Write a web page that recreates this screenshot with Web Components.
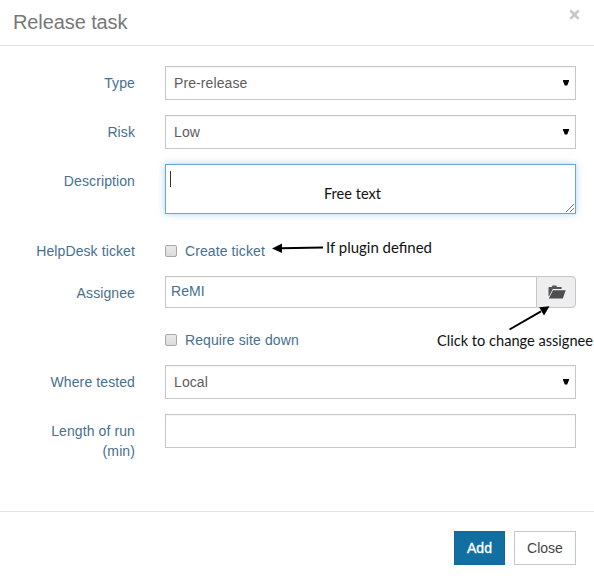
<!DOCTYPE html>
<html lang="en">
<head>
<meta charset="utf-8">
<title>Release task</title>
<style>
html,body{margin:0;background:#fff}
body{font:14px/20px "Liberation Sans",Arial,sans-serif;color:#476f8f;width:594px;height:584px;overflow:hidden}
</style>
</head>
<body>
<task-dialog heading="Release task">
  <form-row label="Type"><select-box>Pre-release</select-box></form-row>
  <form-row label="Risk"><select-box>Low</select-box></form-row>
  <form-row label="Description" style="--after:27px"><text-area></text-area></form-row>
  <form-row label="HelpDesk ticket" style="--pad:0px;--after:15px"><check-box>Create ticket</check-box></form-row>
  <form-row label="Assignee" style="--after:22px"><picker-box>ReMI</picker-box></form-row>
  <form-row label="" style="--pad:0px;--after:15px"><check-box>Require site down</check-box></form-row>
  <form-row label="Where tested"><select-box>Local</select-box></form-row>
  <form-row label="Length of run (min)"><input-box></input-box></form-row>
  <push-button slot="actions" primary>Add</push-button>
  <push-button slot="actions">Close</push-button>
</task-dialog>
<note-layer></note-layer>
<script>
const define = (name, html, setup) => customElements.define(name, class extends HTMLElement {
  connectedCallback() {
    if (this.shadowRoot) return;
    const t = document.createElement('template');
    t.innerHTML = html;
    this.attachShadow({mode: 'open'}).append(t.content.cloneNode(true));
    if (setup) setup(this, this.shadowRoot);
  }
});

define('task-dialog', `<style>
:host{display:flex;flex-direction:column;height:584px;position:relative}
header{box-sizing:border-box;height:46px;border-bottom:1px solid #e2e2e2;padding:7px 14px 0 13px;display:flex;justify-content:space-between}
h1{margin:0;font-size:20px;line-height:30px;font-weight:400;color:#777;letter-spacing:-.1px}
svg{width:11px;height:11px;margin-top:2px;display:block}
main{box-sizing:border-box;height:465px;padding:20px 18px 0 0;letter-spacing:.1px}
footer{border-top:1px solid #e2e2e2;padding:19px 18px 0;display:flex;justify-content:flex-end;gap:9px}
</style>
<header><h1></h1><svg viewBox="0 0 11 11"><path d="M1.3 1.5 9.7 9.9M9.7 1.5 1.3 9.9" stroke="#c8c8c8" stroke-width="2.7"/></svg></header>
<main><slot></slot></main>
<footer><slot name="actions"></slot></footer>`, (el, r) => r.querySelector('h1').textContent = el.getAttribute('heading'));

define('form-row', `<style>
:host{display:grid;grid-template-columns:135px 411px;column-gap:30px;align-items:start;margin-bottom:var(--after,15px)}
label{padding:var(--pad,7px) 0 0 30px;text-align:right}
div{min-width:0}
:host([label^="Length"]) label{padding-left:45px}
</style><label></label><div><slot></slot></div>`, (el, r) => r.querySelector('label').textContent = el.getAttribute('label'));

define('select-box', `<style>
:host{display:flex;box-sizing:border-box;height:34px;border:1px solid #c4c6c8;padding:0 6px 0 8px;align-items:center;justify-content:space-between;color:#5c5c5c;box-shadow:inset 0 1px 1px #0000000a}
svg{width:6px;height:6px;display:block}
</style><span><slot></slot></span><svg viewBox="0 0 6 6"><path d="M0 0H6V1L4.2 5.5H1.8L0 1Z"/></svg>`);

define('input-box', `<style>:host{display:block;box-sizing:border-box;height:34px;border:1px solid #c4c6c8;box-shadow:inset 0 1px 1px #0000000a}</style>`);

define('text-area', `<style>
:host{display:flex;box-sizing:border-box;height:50px;border:1px solid #6ba6d2;box-shadow:0 0 7px #66afe988;padding:6px 1px 1px 4px;justify-content:space-between}
i{width:1px;height:16px;background:#333}
svg{width:8px;height:8px;align-self:flex-end}
</style><i></i><svg viewBox="0 0 8 8"><path d="M0 8 8 0M4 8 8 4" stroke="#666" stroke-width=".9"/></svg>`);

define('check-box', `<style>
:host{display:flex;align-items:center;gap:8px;height:20px}
i{box-sizing:border-box;width:12px;height:12px;border:1px solid #a8a8a8;border-radius:2px;background:linear-gradient(#e9e9e9,#dcdcdc)}
</style><i></i><span><slot></slot></span>`);

define('picker-box', `<style>
:host{display:flex;height:32px}
span,b{box-sizing:border-box;border:1px solid #c4c6c8}
span{flex:1;padding:4px 5px;border-right:0;box-shadow:inset 0 1px 1px #0000000a}
b{width:40px;background:#eee;border-radius:0 4px 4px 0;display:flex;align-items:center;justify-content:center}
svg{width:18px;height:14px;margin-left:2px}
</style><span><slot></slot></span><b><svg viewBox="0 0 18 14"><path d="M.5 11V2.8Q.5 2 1.2 2H3.8L4.5.6H8.3L9 2H13.6V4H4.8L1.2 11Z" fill="#55565a"/><path d="M5 5.2H17.7L14.8 13.4H.8Z" fill="#4c4d51"/></svg></b>`);

define('push-button', `<style>
:host{display:flex;box-sizing:border-box;height:34px;width:62px;border:1px solid #c4c6c8;align-items:center;justify-content:center;color:#444}
:host([primary]){width:51px;background:#116fa2;border-color:#0f6899;color:#fff;-webkit-text-stroke:.35px #fff}
</style><slot></slot>`);

define('note-layer', `<style>
:host{position:absolute;left:0;top:0;width:594px;height:584px;pointer-events:none}
svg{display:block}
text{font-family:Lato,"Open Sans",sans-serif;font-size:15px;fill:#111}
</style><svg width="594" height="584">
<text x="324" y="199" textLength="57" lengthAdjust="spacingAndGlyphs">Free text</text>
<text x="326" y="253" textLength="106" lengthAdjust="spacingAndGlyphs">If plugin defined</text>
<text x="437" y="346" textLength="156" lengthAdjust="spacingAndGlyphs">Click to change assignee</text>
<path d="M323 247.4 281 248.2M509.5 329.5 541 311.3" stroke="#000" stroke-width="2"/>
<path d="M272 248.4 282 243.6V253ZM549.5 306.2 539.2 307.2 544 315.6Z"/>
</svg>`);
</script>
</body>
</html>
